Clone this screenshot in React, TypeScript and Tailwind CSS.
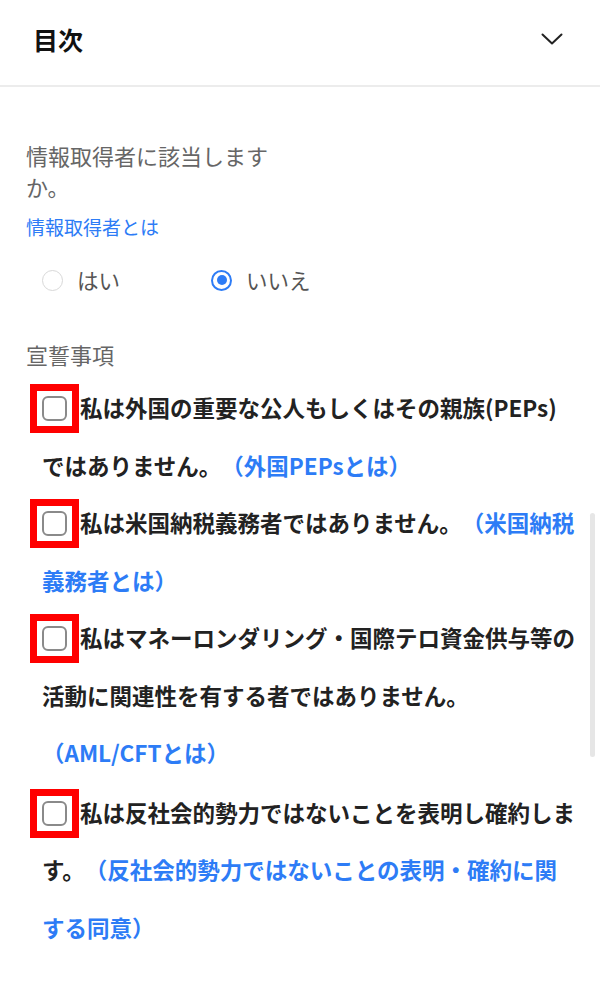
import type { ReactNode } from 'react';

function MarkedCheckbox() {
    return (
        <span className="relative mr-[13px] inline-block h-[25px] w-[25px] rounded-[6px] border-2 border-[#8a8a8a] bg-white align-middle -translate-y-[2px]">
            <span className="absolute -inset-[14px] border-[7px] border-[#ff0000]" />
        </span>
    );
}

function Link({ children }: { children: ReactNode }) {
    return <span className="text-[#2d7cf6]">{children}</span>;
}

function Radio({ checked, label }: { checked?: boolean; label: string }) {
    return (
        <label className="flex items-center gap-[14px]">
            {checked ? (
                <span className="flex h-[21px] w-[21px] items-center justify-center rounded-full border-2 border-[#2d7cf6]">
                    <span className="h-[10px] w-[10px] rounded-full bg-[#2d7cf6]" />
                </span>
            ) : (
                <span className="h-[21px] w-[21px] rounded-full border-[1.5px] border-[#d8d8d8]" />
            )}
            <span className="text-[21.5px] leading-[30px] text-[#555]">{label}</span>
        </label>
    );
}

export default function App() {
    return (
        <div className="relative min-h-[1000px] w-[600px] bg-white font-['Noto_Sans_CJK_JP','Noto_Sans',sans-serif] [text-spacing-trim:space-all]">
            <div className="flex h-[87px] items-center justify-between border-b-2 border-[#ececec] pb-[7px] pl-[33px] pr-[37px]">
                <h2 className="text-[25px] font-bold leading-none text-[#111]">目次</h2>
                <svg width="22" height="12" viewBox="0 0 22 12" fill="none">
                    <path d="M1.5 1.5L11 10.5L20.5 1.5" stroke="#222" strokeWidth="2" strokeLinecap="round" strokeLinejoin="round" />
                </svg>
            </div>

            <div className="pl-[26px] pr-[20px] pt-[53px]">
                <p className="w-[255px] text-[22px] leading-[31px] text-[#666]">情報取得者に該当しますか。</p>
                <p className="mt-[12px] text-[19px] leading-[26px] text-[#2d7cf6]">情報取得者とは</p>

                <div className="mt-[25px] flex pl-[16px]">
                    <div className="w-[169px]">
                        <Radio label="はい" />
                    </div>
                    <Radio checked label="いいえ" />
                </div>

                <p className="mt-[44px] text-[22px] leading-[30px] text-[#666]">宣誓事項</p>

                <div className="mt-[10px] whitespace-nowrap pl-[16px] text-[22.5px] font-bold leading-[57.5px] text-[#222]">
                    <p>
                        <MarkedCheckbox />
                        私は外国の重要な公人もしくはその親族(PEPs)
                        <br />
                        ではありません。<Link>（外国PEPsとは）</Link>
                    </p>
                    <p>
                        <MarkedCheckbox />
                        私は米国納税義務者ではありません。<Link>（米国納税<br />義務者とは）</Link>
                    </p>
                    <p>
                        <MarkedCheckbox />
                        私はマネーロンダリング・国際テロ資金供与等の
                        <br />
                        活動に関連性を有する者ではありません。
                        <br />
                        <Link>（AML/CFTとは）</Link>
                    </p>
                    <p className="mt-[2px]">
                        <MarkedCheckbox />
                        私は反社会的勢力ではないことを表明し確約しま
                        <br />
                        す。<Link>（反社会的勢力ではないことの表明・確約に関<br />する同意）</Link>
                    </p>
                </div>
            </div>

            <div className="absolute left-[590px] top-[513px] h-[244px] w-[5px] rounded-full bg-[#e6e6e6]" />
        </div>
    );
}
